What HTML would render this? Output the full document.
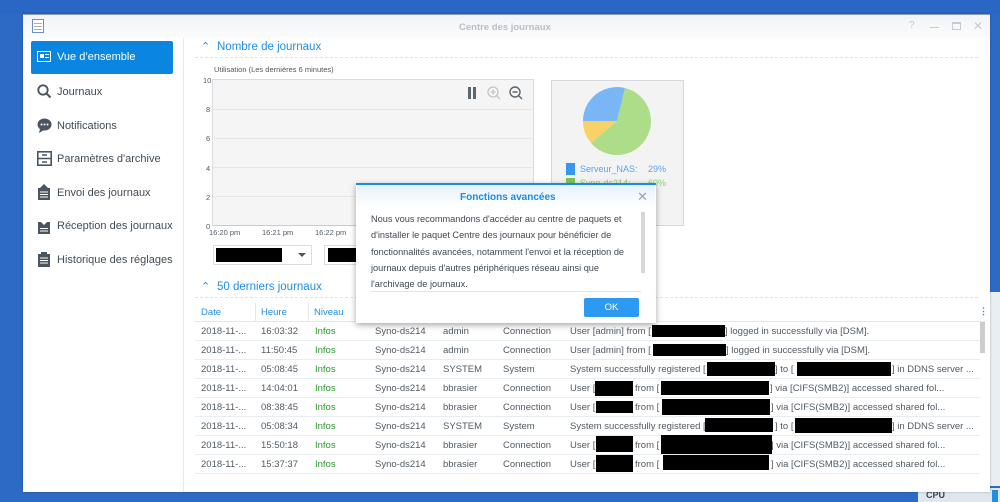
<!DOCTYPE html>
<html><head><meta charset="utf-8"><style>
*{margin:0;padding:0;box-sizing:border-box}
body{width:1000px;height:502px;overflow:hidden;background:#2d6ac6;font-family:"Liberation Sans",sans-serif;position:relative;font-size:10px;color:#505a64}
.a{position:absolute;white-space:nowrap}
.blk{position:absolute;background:#000}
.row{position:absolute;left:195px;width:785px;height:19px;border-bottom:1px solid #e8edf2}
.row span{position:absolute;top:4px;font-size:9.5px;color:#505a64}
.nav{position:absolute;left:57px;font-size:11px;color:#414b55}
.ic{position:absolute;left:37px}
</style></head><body>
<div class="a" style="left:0;top:0;width:1000px;height:14px;background:#2a66c4"></div>
<div class="a" style="left:985px;top:292px;width:15px;height:194px;background:#e9eef3"></div>
<div class="a" style="left:918px;top:488px;width:82px;height:14px;background:#dfe6ee"></div>
<div class="a" style="left:926px;top:490px;font-size:9px;font-weight:bold;color:#3b4450">CPU</div>
<div class="a" style="left:992px;top:490px;width:6px;height:12px;background:#1f8fe6"></div>
<div class="a" style="left:23px;top:14px;width:967px;height:478px;background:#fff;box-shadow:0 0 2px rgba(0,0,0,.3)"></div>
<div class="a" style="left:23px;top:14px;width:967px;height:24px;background:linear-gradient(#f1f3f6,#fbfcfd);border-top:1px solid #8fa0b4"></div>
<div class="a" style="left:32px;top:19px;width:12px;height:14px;border:1px solid #6d8fc4;background:#fff"></div>
<div class="a" style="left:34px;top:23px;width:8px;height:1px;background:#aab;box-shadow:0 3px #aab,0 6px #aab"></div>
<div class="a" style="left:459px;top:22px;font-size:9.5px;font-weight:bold;color:#b8bfc7">Centre des journaux</div>
<div class="a" style="left:909px;top:20px;font-size:10px;color:#c5cbd2">?</div>
<div class="a" style="left:930px;top:27px;width:9px;height:1px;background:#c5cbd2"></div>
<div class="a" style="left:952px;top:22px;width:9px;height:8px;border:1px solid #c5cbd2;border-top-width:2px"></div>
<div class="a" style="left:973px;top:19px;font-size:12px;color:#c5cbd2">✕</div>
<div class="a" style="left:183px;top:38px;width:1px;height:454px;background:#e6eaee"></div>
<div class="a" style="left:31px;top:41px;width:142px;height:33px;background:#0a86e0;border-radius:2px"></div>
<div class="a" style="left:37px;top:51px;width:14px;height:11px;border:1.5px solid #fff"></div>
<div class="a" style="left:40px;top:54px;width:4px;height:4px;background:#fff"></div>
<div class="a" style="left:45px;top:54px;width:4px;height:1px;background:#fff;box-shadow:0 3px #fff"></div>
<div class="a" style="left:57px;top:51px;font-size:11px;color:#fff">Vue d’ensemble</div>
<svg class="ic" style="top:84px" width="15" height="15"><circle cx="6" cy="6" r="4.7" fill="none" stroke="#4b5560" stroke-width="1.8"/><path d="M9.5 9.5L13.5 13.5" stroke="#4b5560" stroke-width="2"/></svg>
<div class="nav" style="top:86px">Journaux</div>
<svg class="ic" style="top:118px" width="15" height="15"><ellipse cx="7.5" cy="6.5" rx="7" ry="6" fill="#4b5560"/><path d="M3 11L2 15L7 12Z" fill="#4b5560"/><circle cx="4.5" cy="6.5" r="1" fill="#fff"/><circle cx="7.5" cy="6.5" r="1" fill="#fff"/><circle cx="10.5" cy="6.5" r="1" fill="#fff"/></svg>
<div class="nav" style="top:120px">Notifications</div>
<svg class="ic" style="top:151px" width="15" height="15"><rect x="0.8" y="0.8" width="13.4" height="13.4" fill="none" stroke="#4b5560" stroke-width="1.6"/><path d="M1 7.5H14M5 4H10M5 11H10" stroke="#4b5560" stroke-width="1.4"/></svg>
<div class="nav" style="top:153px">Paramètres d'archive</div>
<svg class="ic" style="top:184px" width="15" height="16"><rect x="1" y="4" width="12" height="12" fill="#4b5560"/><path d="M7 0L11 4H3Z" fill="#4b5560"/><path d="M3 8H11M3 10.5H11M3 13H11" stroke="#fff"/></svg>
<div class="nav" style="top:187px">Envoi des journaux</div>
<svg class="ic" style="top:218px" width="15" height="16"><rect x="1" y="4" width="12" height="12" fill="#4b5560"/><path d="M7 7L11 3H3Z" fill="#fff"/><path d="M3 10.5H11M3 13H11" stroke="#fff"/></svg>
<div class="nav" style="top:220px">Réception des journaux</div>
<svg class="ic" style="top:251px" width="15" height="16"><rect x="1" y="3" width="12" height="13" fill="#4b5560"/><rect x="4" y="1" width="6" height="3" fill="#4b5560"/><path d="M3 7H11M3 9.5H11M3 12H11" stroke="#fff"/></svg>
<div class="nav" style="top:254px">Historique des réglages</div>
<div class="a" style="left:201px;top:40px;font-size:11px;color:#1d8ee8">⌃</div>
<div class="a" style="left:217px;top:41px;font-size:11.5px;color:#1d8ee8">Nombre de journaux</div>
<div class="a" style="left:195px;top:57px;width:783px;border-top:1px dashed #dfe4e9"></div>
<div class="a" style="left:214px;top:65px;font-size:7.5px;color:#555">Utilisation (Les dernières 6 minutes)</div>
<div class="a" style="left:212px;top:79px;width:322px;height:147px;background:#f5f5f5;border:1px solid #d9dde2"></div>
<div class="a" style="left:213px;top:109px;width:320px;height:1px;background:#e6e6e6;box-shadow:0 29px #e6e6e6,0 58px #e6e6e6,0 87px #e6e6e6"></div>
<div class="a" style="left:213px;top:225px;width:320px;height:1px;background:#f5c96b"></div>
<div class="a" style="left:203px;top:76px;font-size:7.5px">10</div>
<div class="a" style="left:206px;top:105px;font-size:7.5px">8</div>
<div class="a" style="left:206px;top:134px;font-size:7.5px">6</div>
<div class="a" style="left:206px;top:164px;font-size:7.5px">4</div>
<div class="a" style="left:206px;top:193px;font-size:7.5px">2</div>
<div class="a" style="left:206px;top:222px;font-size:7.5px">0</div>
<div class="a" style="left:209px;top:228px;font-size:7.5px">16:20 pm</div>
<div class="a" style="left:262px;top:228px;font-size:7.5px">16:21 pm</div>
<div class="a" style="left:315px;top:228px;font-size:7.5px">16:22 pm</div>
<div class="a" style="left:468px;top:87px;width:3px;height:12px;background:#5b6670;box-shadow:5px 0 #5b6670"></div>
<svg class="a" style="left:487px;top:86px" width="14" height="14"><circle cx="6" cy="6" r="5" fill="none" stroke="#c0c6cc" stroke-width="1.3"/><path d="M3.5 6H8.5M6 3.5V8.5M9.5 9.5L13 13" stroke="#c0c6cc" stroke-width="1.3"/></svg>
<svg class="a" style="left:509px;top:86px" width="14" height="14"><circle cx="6" cy="6" r="5" fill="none" stroke="#5b6670" stroke-width="1.4"/><path d="M3.5 6H8.5M9.5 9.5L13 13" stroke="#5b6670" stroke-width="1.4"/></svg>
<div class="a" style="left:213px;top:245px;width:99px;height:20px;border:1px solid #d9dde2;background:#fff"></div>
<div class="blk" style="left:216px;top:248px;width:66px;height:14px"></div>
<div class="a" style="left:298px;top:253px;border:4px solid transparent;border-top:4px solid #4b5560"></div>
<div class="a" style="left:324px;top:245px;width:40px;height:20px;border:1px solid #d9dde2;background:#fff"></div>
<div class="blk" style="left:328px;top:248px;width:32px;height:14px"></div>
<div class="a" style="left:551px;top:80px;width:133px;height:146px;background:#f3f3f3;border:1px solid #d5d9de"></div>
<svg class="a" style="left:0;top:0" width="700" height="240">
<path d="M617 121L583 121A34 34 0 0 1 625 88Z" fill="#7ab6f5"/>
<path d="M617 121L625 88A34 34 0 1 1 591 143Z" fill="#aedd8a"/>
<path d="M617 121L591 143A34 34 0 0 1 583 121Z" fill="#f8d266"/>
</svg>
<div class="a" style="left:566px;top:163px;width:9px;height:12px;background:#3796f0"></div>
<div class="a" style="left:580px;top:164px;font-size:9px;color:#5aa2ee">Serveur_NAS:</div>
<div class="a" style="left:648px;top:164px;font-size:9px;color:#5aa2ee">29%</div>
<div class="a" style="left:566px;top:178px;width:9px;height:10px;background:#7cc554"></div>
<div class="a" style="left:580px;top:178px;font-size:9px;color:#8ccd6a">Syno-ds214:</div>
<div class="a" style="left:648px;top:178px;font-size:9px;color:#8ccd6a">60%</div>
<div class="a" style="left:201px;top:280px;font-size:11px;color:#1d8ee8">⌃</div>
<div class="a" style="left:217px;top:281px;font-size:11.5px;color:#1d8ee8">50 derniers journaux</div>
<div class="a" style="left:195px;top:297px;width:783px;border-top:1px dashed #dfe4e9"></div>
<div class="a" style="left:195px;top:303px;width:790px;height:19px;border-bottom:1px solid #e3e8ed"></div>
<div class="a" style="left:255px;top:303px;width:1px;height:19px;background:#e3e8ed"></div>
<div class="a" style="left:308px;top:303px;width:1px;height:19px;background:#e3e8ed"></div>
<div class="a" style="left:201px;top:307px;font-size:9.5px;color:#1d8ee8">Date</div>
<div class="a" style="left:261px;top:307px;font-size:9.5px;color:#1d8ee8">Heure</div>
<div class="a" style="left:314px;top:307px;font-size:9.5px;color:#1d8ee8">Niveau</div>
<div class="a" style="left:979px;top:306px;font-size:9px;color:#1d8ee8;font-weight:bold">⋮</div>
<div class="a" style="left:980px;top:322px;width:5px;height:31px;background:#ccc"></div>
<div class="row" style="top:322px"><span style="left:6px">2018-11-...</span><span style="left:66px">16:03:32</span><span style="left:120px;color:#2a9a2a">Infos</span><span style="left:180px">Syno-ds214</span><span style="left:248px">admin</span><span style="left:308px">Connection</span><span style="left:375px">User [admin] from [</span><span style="left:530px">] logged in successfully via [DSM].</span></div>
<div class="row" style="top:341px"><span style="left:6px">2018-11-...</span><span style="left:66px">11:50:45</span><span style="left:120px;color:#2a9a2a">Infos</span><span style="left:180px">Syno-ds214</span><span style="left:248px">admin</span><span style="left:308px">Connection</span><span style="left:375px">User [admin] from [</span><span style="left:531px">] logged in successfully via [DSM].</span></div>
<div class="row" style="top:360px"><span style="left:6px">2018-11-...</span><span style="left:66px">05:08:45</span><span style="left:120px;color:#2a9a2a">Infos</span><span style="left:180px">Syno-ds214</span><span style="left:248px">SYSTEM</span><span style="left:308px">System</span><span style="left:375px">System successfully registered [</span><span style="left:580px">] to [</span><span style="left:697px">] in DDNS server ...</span></div>
<div class="row" style="top:379px"><span style="left:6px">2018-11-...</span><span style="left:66px">14:04:01</span><span style="left:120px;color:#2a9a2a">Infos</span><span style="left:180px">Syno-ds214</span><span style="left:248px">bbrasier</span><span style="left:308px">Connection</span><span style="left:375px">User [</span><span style="left:440px">from [</span><span style="left:575px">] via [CIFS(SMB2)] accessed shared fol...</span></div>
<div class="row" style="top:398px"><span style="left:6px">2018-11-...</span><span style="left:66px">08:38:45</span><span style="left:120px;color:#2a9a2a">Infos</span><span style="left:180px">Syno-ds214</span><span style="left:248px">bbrasier</span><span style="left:308px">Connection</span><span style="left:375px">User [</span><span style="left:440px">from [</span><span style="left:576px">] via [CIFS(SMB2)] accessed shared fol...</span></div>
<div class="row" style="top:417px"><span style="left:6px">2018-11-...</span><span style="left:66px">05:08:34</span><span style="left:120px;color:#2a9a2a">Infos</span><span style="left:180px">Syno-ds214</span><span style="left:248px">SYSTEM</span><span style="left:308px">System</span><span style="left:375px">System successfully registered [</span><span style="left:580px">] to [</span><span style="left:697px">] in DDNS server ...</span></div>
<div class="row" style="top:436px"><span style="left:6px">2018-11-...</span><span style="left:66px">15:50:18</span><span style="left:120px;color:#2a9a2a">Infos</span><span style="left:180px">Syno-ds214</span><span style="left:248px">bbrasier</span><span style="left:308px">Connection</span><span style="left:375px">User [</span><span style="left:440px">from [</span><span style="left:576px">] via [CIFS(SMB2)] accessed shared fol...</span></div>
<div class="row" style="top:455px"><span style="left:6px">2018-11-...</span><span style="left:66px">15:37:37</span><span style="left:120px;color:#2a9a2a">Infos</span><span style="left:180px">Syno-ds214</span><span style="left:248px">bbrasier</span><span style="left:308px">Connection</span><span style="left:375px">User [</span><span style="left:440px">from [</span><span style="left:576px">] via [CIFS(SMB2)] accessed shared fol...</span></div>
<div class="blk" style="left:652px;top:325px;width:73px;height:12px"></div>
<div class="blk" style="left:653px;top:344px;width:73px;height:12px"></div>
<div class="blk" style="left:707px;top:362px;width:68px;height:14px"></div>
<div class="blk" style="left:797px;top:362px;width:94px;height:14px"></div>
<div class="blk" style="left:595px;top:381px;width:38px;height:15px"></div>
<div class="blk" style="left:661px;top:381px;width:108px;height:14px"></div>
<div class="blk" style="left:596px;top:401px;width:37px;height:12px"></div>
<div class="blk" style="left:662px;top:399px;width:108px;height:16px"></div>
<div class="blk" style="left:705px;top:418px;width:68px;height:14px"></div>
<div class="blk" style="left:795px;top:418px;width:97px;height:15px"></div>
<div class="blk" style="left:596px;top:436px;width:37px;height:16px"></div>
<div class="blk" style="left:661px;top:435px;width:111px;height:19px"></div>
<div class="blk" style="left:596px;top:455px;width:37px;height:17px"></div>
<div class="blk" style="left:663px;top:455px;width:106px;height:15px"></div>
<div class="a" style="left:356px;top:183px;width:300px;height:140px;background:#fff;border-top:2px solid #1a8ae6;box-shadow:0 2px 6px rgba(0,0,0,.35)"></div>
<div class="a" style="left:357px;top:185px;width:298px;height:22px;background:linear-gradient(#e6f1fb,#fff)"></div>
<div class="a" style="left:460px;top:192px;font-size:10px;font-weight:bold;color:#1a8ae6">Fonctions avancées</div>
<div class="a" style="left:637px;top:189px;font-size:13px;color:#9aa3ad">✕</div>
<div class="a" style="left:371px;top:211px;font-size:9.2px;line-height:16.3px;color:#3f4850;white-space:normal;width:268px">Nous vous recommandons d'accéder au centre de paquets et d'installer le paquet Centre des journaux pour bénéficier de fonctionnalités avancées, notamment l'envoi et la réception de journaux depuis d'autres périphériques réseau ainsi que l'archivage de journaux.</div>
<div class="a" style="left:641px;top:212px;width:4px;height:61px;background:#d6d6d6"></div>
<div class="a" style="left:371px;top:291px;width:270px;height:1px;background:#e0e4e8"></div>
<div class="a" style="left:584px;top:298px;width:55px;height:19px;background:#2c9af0;border-radius:2px;color:#fff;font-size:9.5px;text-align:center;line-height:19px">OK</div>
</body></html>
